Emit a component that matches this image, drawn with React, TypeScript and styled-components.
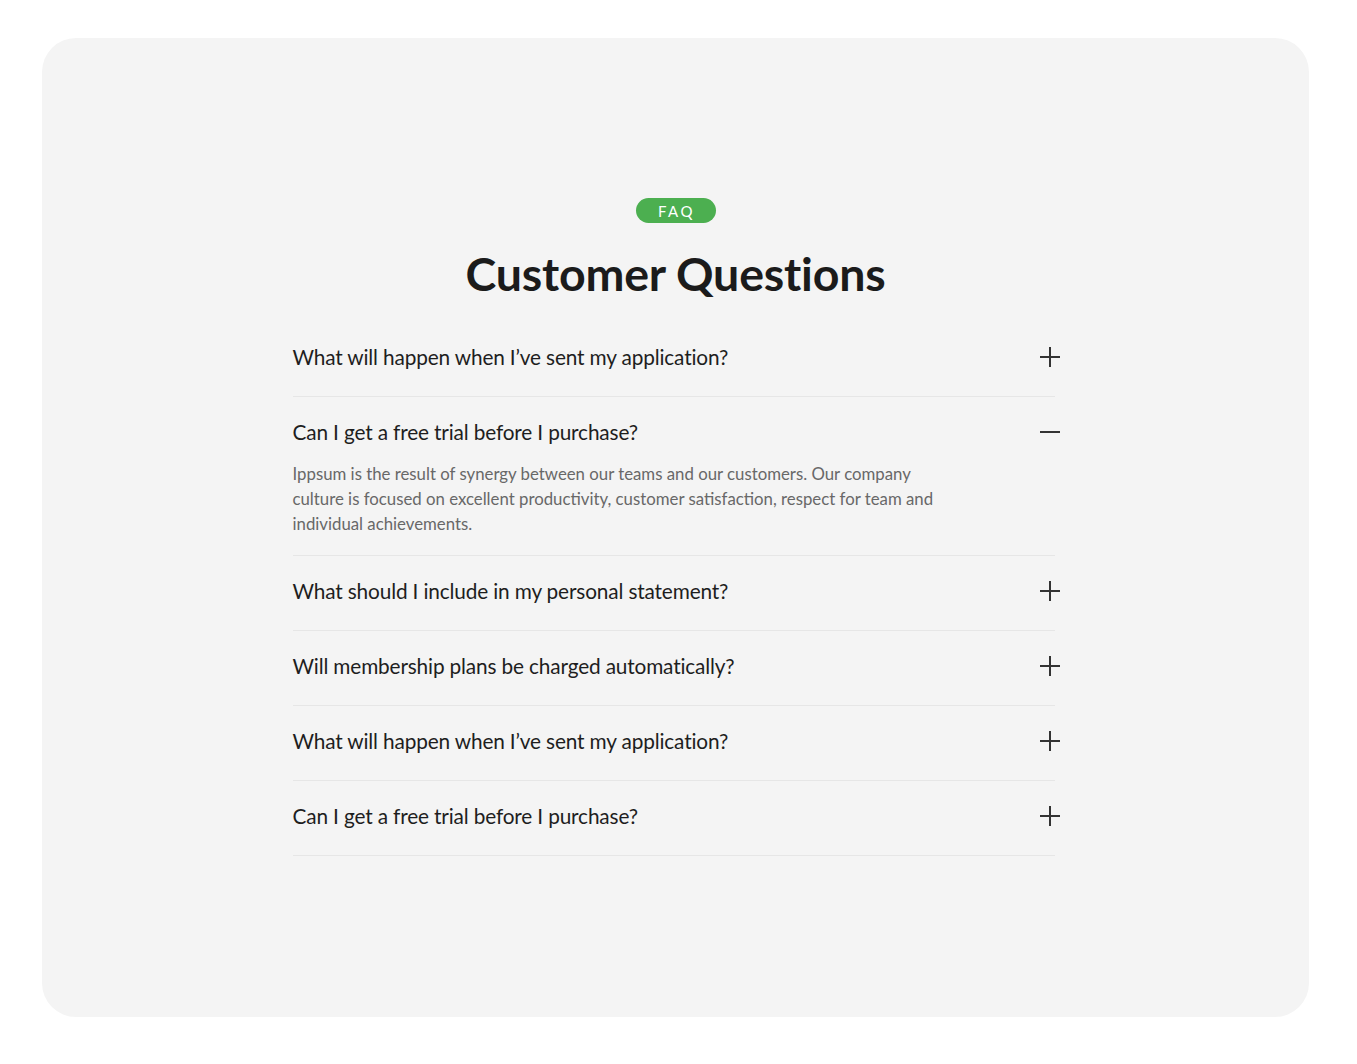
import styled, { createGlobalStyle } from 'styled-components'

const GlobalStyle = createGlobalStyle`
  html, body {
    margin: 0;
    padding: 0;
    background: #ffffff;
  }
  body {
    font-family: Lato, 'Open Sans', sans-serif;
  }
`

type FaqItem = {
  question: string
  answer?: string
  open?: boolean
}

const items: FaqItem[] = [
  { question: 'What will happen when I’ve sent my application?' },
  {
    question: 'Can I get a free trial before I purchase?',
    answer:
      'Ippsum is the result of synergy between our teams and our customers. Our company culture is focused on excellent productivity, customer satisfaction, respect for team and individual achievements.',
    open: true,
  },
  { question: 'What should I include in my personal statement?' },
  { question: 'Will membership plans be charged automatically?' },
  { question: 'What will happen when I’ve sent my application?' },
  { question: 'Can I get a free trial before I purchase?' },
]

const ToggleIcon = ({ open }: { open?: boolean }) => (
  <svg width='22' height='22' viewBox='0 0 22 22' fill='none'>
    <path d='M1 11h20' stroke='#333' strokeWidth='2' />
    {!open && <path d='M11 1v20' stroke='#333' strokeWidth='2' />}
  </svg>
)

const App = () => {
  return (
    <>
      <GlobalStyle />
      <StyledCard>
        <StyledBadge>FAQ</StyledBadge>
        <StyledHeading>Customer Questions</StyledHeading>

        <StyledList>
          {items.map((item, index) => (
            <StyledRow key={index} open={item.open}>
              <StyledQuestionLine>
                <StyledQuestion>{item.question}</StyledQuestion>
                <StyledIconWrapper>
                  <ToggleIcon open={item.open} />
                </StyledIconWrapper>
              </StyledQuestionLine>
              {item.open && item.answer && <StyledAnswer>{item.answer}</StyledAnswer>}
            </StyledRow>
          ))}
        </StyledList>
      </StyledCard>
    </>
  )
}

export default App

const StyledCard = styled.div`
  margin: 38px 48px 0 42px;
  height: 979px;
  box-sizing: border-box;
  padding-top: 160px;

  border-radius: 34px;
  background: #f4f4f4;

  display: flex;
  flex-direction: column;
  align-items: center;
`

const StyledBadge = styled.div`
  width: 80px;
  height: 25px;
  border-radius: 13px;
  background: #4caf50;
  color: #ffffff;

  display: flex;
  align-items: center;
  justify-content: center;

  font-size: 15px;
  letter-spacing: 2.5px;
  padding-left: 2px;
  box-sizing: border-box;
`

const StyledHeading = styled.h1`
  margin: 24px 0 23px;
  font-size: 46.5px;
  line-height: 52px;
  font-weight: 700;
  color: #1b1b1b;
  letter-spacing: -0.2px;
`

const StyledList = styled.div`
  width: 766px;
  display: flex;
  flex-direction: column;
`

const StyledRow = styled.div<{ open?: boolean }>`
  padding: ${p => (p.open ? '23px 0 19px' : '23px 0 27px')};
  border-bottom: 1px solid #e6e6e6;
  margin-right: 4px;
`

const StyledQuestionLine = styled.div`
  display: flex;
  align-items: center;
  justify-content: space-between;
  height: 24px;
  margin-right: -6px;
`

const StyledQuestion = styled.div`
  font-size: 20.8px;
  line-height: 24px;
  color: #1e1e1e;
  letter-spacing: -0.15px;
`

const StyledIconWrapper = styled.div`
  width: 22px;
  height: 22px;
  display: flex;
`

const StyledAnswer = styled.p`
  margin: 17px 0 0;
  max-width: 660px;
  font-size: 16.8px;
  line-height: 25px;
  color: #686868;
`
